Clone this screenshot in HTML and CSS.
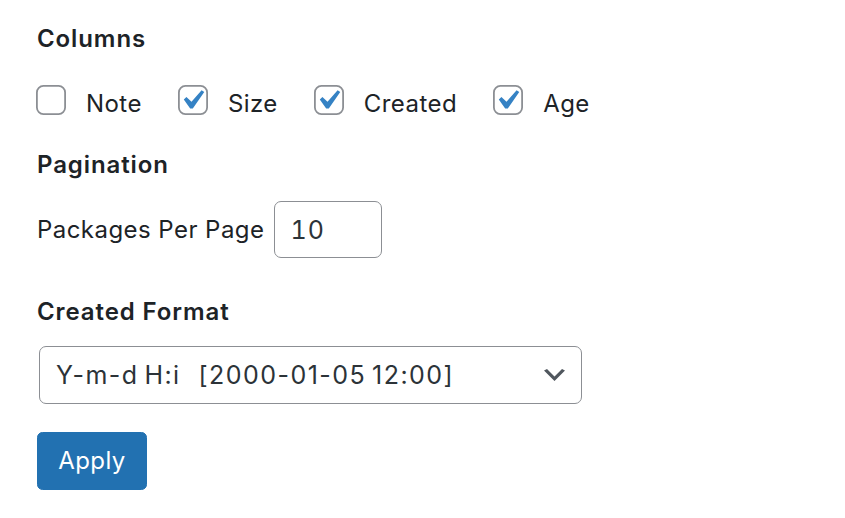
FILE: index.html
```html
<!DOCTYPE html>
<html lang="en">
<head>
<meta charset="utf-8">
<title>Screen Options</title>
<link rel="stylesheet" href="styles.css">
</head>
<body>
<div class="panel">
  <h5 class="legend legend-columns">Columns</h5>
  <div class="checks">
    <label class="check">
      <svg class="box" viewBox="0 0 30 30" width="30" height="30"><rect x="0.9" y="0.9" width="28.2" height="28.2" rx="6.5" fill="#fff" stroke="#8c8f94" stroke-width="1.8"/></svg>
      <span class="check-text">Note</span>
    </label>
    <label class="check">
      <svg class="box" viewBox="0 0 30 30" width="30" height="30"><rect x="0.9" y="0.9" width="28.2" height="28.2" rx="6.5" fill="#fff" stroke="#8c8f94" stroke-width="1.8"/><path transform="translate(-5.6 -4.5) scale(1.97)" d="M14.83 4.89l1.34.94-5.81 8.38H9.02L5.78 9.67l1.34-1.25 2.57 2.4z" fill="#3582c4"/></svg>
      <span class="check-text">Size</span>
    </label>
    <label class="check">
      <svg class="box" viewBox="0 0 30 30" width="30" height="30"><rect x="0.9" y="0.9" width="28.2" height="28.2" rx="6.5" fill="#fff" stroke="#8c8f94" stroke-width="1.8"/><path transform="translate(-5.6 -4.5) scale(1.97)" d="M14.83 4.89l1.34.94-5.81 8.38H9.02L5.78 9.67l1.34-1.25 2.57 2.4z" fill="#3582c4"/></svg>
      <span class="check-text">Created</span>
    </label>
    <label class="check">
      <svg class="box" viewBox="0 0 30 30" width="30" height="30"><rect x="0.9" y="0.9" width="28.2" height="28.2" rx="6.5" fill="#fff" stroke="#8c8f94" stroke-width="1.8"/><path transform="translate(-5.6 -4.5) scale(1.97)" d="M14.83 4.89l1.34.94-5.81 8.38H9.02L5.78 9.67l1.34-1.25 2.57 2.4z" fill="#3582c4"/></svg>
      <span class="check-text">Age</span>
    </label>
  </div>

  <h5 class="legend legend-pagination">Pagination</h5>
  <div class="per-page">
    <span class="per-page-label">Packages Per Page</span>
    <div class="number-input">10</div>
  </div>

  <h5 class="legend legend-format">Created Format</h5>
  <div class="select">
    <span class="select-text">Y-m-d H:i&nbsp;&nbsp;&nbsp;[2000-01-05 12:00]</span>
    <svg class="chevron" viewBox="3 6 14 8" width="21" height="12"><path d="M5 6l5 5 5-5 2 1-7 7-7-7 2-1z" fill="#50575e"/></svg>
  </div>

  <div class="actions">
    <button class="button-primary" type="button">Apply</button>
  </div>
</div>
</body>
</html>
```

FILE: styles.css
```css
* { box-sizing: border-box; }

html, body {
  margin: 0;
  padding: 0;
  background: #ffffff;
}

body {
  font-family: Inter, "Noto Sans", "Liberation Sans", sans-serif;
  font-size: 24px;
  line-height: 32px;
  letter-spacing: 0.45px;
  color: #1d2327;
}

.panel {
  padding: 22.5px 0 0 37px;
}

.legend {
  margin: 0;
  font-size: 24px;
  line-height: 32px;
  font-weight: 600;
  letter-spacing: 0.9px;
  color: #1d2327;
}

.checks {
  display: flex;
  margin-top: 26px;
  margin-left: -1px;
  gap: 36px;
}

.check {
  display: flex;
  align-items: center;
}

.box {
  display: block;
  flex: none;
  margin-right: 20px;
}

.check-text {
  padding-top: 7px;
}

.legend-pagination {
  margin-top: 29px;
}

.per-page {
  display: flex;
  align-items: center;
  margin-top: 20.5px;
}

.per-page-label {
  margin-right: 10px;
}

.number-input {
  width: 108px;
  height: 57px;
  border: 1.8px solid #8c8f94;
  border-radius: 7px;
  padding-left: 15px;
  display: flex;
  align-items: center;
  font-size: 25px;
  letter-spacing: 1.2px;
  font-variant-numeric: tabular-nums;
  color: #2c3338;
}

.legend-format {
  margin-top: 37.5px;
}

.select {
  margin-top: 18.5px;
  margin-left: 2px;
  width: 543px;
  height: 58px;
  border: 1.8px solid #8c8f94;
  border-radius: 7px;
  padding: 0 16px 0 16px;
  display: flex;
  align-items: center;
  justify-content: space-between;
  color: #2c3338;
}

.select-text {
  white-space: pre;
  font-size: 25px;
  letter-spacing: 1.45px;
  word-spacing: -2.5px;
}

.chevron {
  display: block;
  flex: none;
}

.actions {
  margin-top: 28px;
}

.button-primary {
  display: block;
  width: 110px;
  height: 58px;
  margin: 0;
  padding: 0;
  background: #2271b1;
  border: 1.8px solid #2271b1;
  border-radius: 5.5px;
  color: #ffffff;
  font-family: inherit;
  font-size: 24px;
  line-height: 32px;
  letter-spacing: 0.45px;
  font-weight: 400;
}
```
